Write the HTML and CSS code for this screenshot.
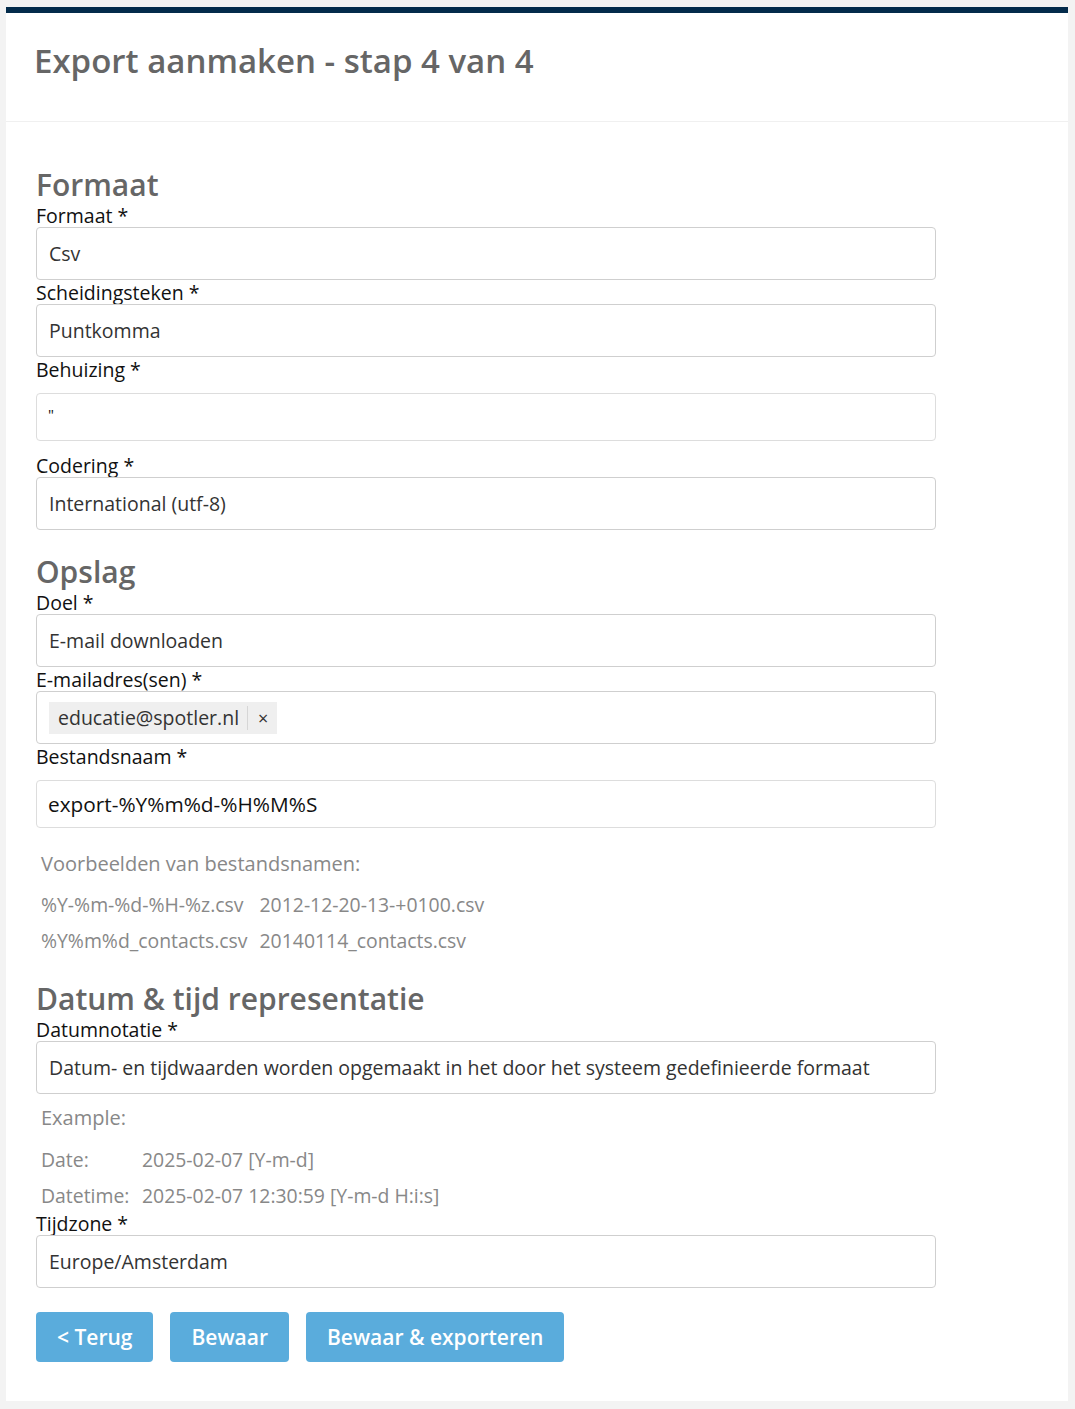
FILE: index.html
```html
<!DOCTYPE html>
<html lang="nl">
<head>
    <meta charset="UTF-8">
    <meta name="viewport" content="width=device-width, initial-scale=1.0">
    <title>Export aanmaken</title>
    <link rel="stylesheet" href="styles.css">
</head>
<body>
    <div class="panel">
        <div class="panel-header">
            <h1>Export aanmaken - stap 4 van 4</h1>
        </div>
        <form class="panel-body">
            <h2>Formaat</h2>
            <label>Formaat *</label>
            <div class="select">Csv</div>
            <label>Scheidingsteken *</label>
            <div class="select">Puntkomma</div>
            <label>Behuizing *</label>
            <div class="text-input small">"</div>
            <label>Codering *</label>
            <div class="select">International (utf-8)</div>

            <h2>Opslag</h2>
            <label>Doel *</label>
            <div class="select">E-mail downloaden</div>
            <label>E-mailadres(sen) *</label>
            <div class="select tags">
                <span class="tag">educatie@spotler.nl<span class="tag-remove">×</span></span>
            </div>
            <label>Bestandsnaam *</label>
            <div class="text-input">export-%Y%m%d-%H%M%S</div>
            <div class="help">
                <p>Voorbeelden van bestandsnamen:</p>
                <table class="examples">
                    <tr><td>%Y-%m-%d-%H-%z.csv</td><td>2012-12-20-13-+0100.csv</td></tr>
                    <tr><td>%Y%m%d_contacts.csv</td><td>20140114_contacts.csv</td></tr>
                </table>
            </div>

            <h2>Datum &amp; tijd representatie</h2>
            <label>Datumnotatie *</label>
            <div class="select">Datum- en tijdwaarden worden opgemaakt in het door het systeem gedefinieerde formaat</div>
            <div class="help help-date">
                <p>Example:</p>
                <table class="examples">
                    <tr><td class="key">Date:</td><td>2025-02-07 [Y-m-d]</td></tr>
                    <tr><td class="key">Datetime:</td><td>2025-02-07 12:30:59 [Y-m-d H:i:s]</td></tr>
                </table>
            </div>
            <label>Tijdzone *</label>
            <div class="select">Europe/Amsterdam</div>

            <div class="buttons">
                <button type="button" class="btn">&lt; Terug</button>
                <button type="button" class="btn">Bewaar</button>
                <button type="button" class="btn">Bewaar &amp; exporteren</button>
            </div>
        </form>
    </div>
</body>
</html>
```

FILE: styles.css
```css
* {
    box-sizing: border-box;
    font-family: "Open Sans", "Noto Sans", Arial, sans-serif;
}
body {
    margin: 0;
    padding: 7px 7px 8px 6px;
    background-color: #f3f3f3;
}
.panel {
    background-color: #fff;
    border-top: 6px solid #032b4b;
}
.panel-header {
    padding: 28px 28px 40px;
    border-bottom: 1px solid #f0f0f0;
}
h1 {
    margin: 0;
    font-size: 33px;
    line-height: 40px;
    font-weight: 600;
    color: #666;
}
.panel-body {
    padding: 21px 30px 39px;
    display: flex;
    flex-direction: column;
    align-items: flex-start;
}
h2 {
    margin: 24px 0 0 0;
    font-size: 30px;
    line-height: 36px;
    font-weight: 600;
    color: #666;
}
.help + h2 {
    margin-top: 23px;
}
label {
    display: block;
    font-size: 19.5px;
    line-height: 23px;
    color: #111;
    margin-top: 1px;
}
.select {
    width: 900px;
    height: 53px;
    border: 1px solid #cfcfcf;
    border-radius: 4px;
    padding: 0 12px;
    display: flex;
    align-items: center;
    font-size: 19.5px;
    color: #333;
}
.tags {
    padding: 0 12px;
}
.tag {
    display: inline-flex;
    align-items: center;
    height: 32px;
    background-color: #efefef;
    padding: 0 0 0 9px;
    font-size: 19.5px;
    color: #333;
}
.tag-remove {
    display: inline-block;
    margin-left: 8px;
    padding: 0 9px 0 10px;
    border-left: 1px solid #d6d6d6;
    line-height: 24px;
    font-size: 18px;
    color: #333;
}
.text-input {
    width: 900px;
    height: 48px;
    margin: 12px 0;
    border: 1px solid #ddd;
    border-radius: 4px;
    padding: 0 11px;
    display: flex;
    align-items: center;
    font-size: 20.8px;
    color: #111;
}
.text-input.small {
    font-size: 15px;
    align-items: flex-start;
    padding-top: 10px;
}
.help {
    padding-left: 5px;
    color: #888;
}
.help p {
    margin: 6px 0 4px;
    font-size: 20px;
    line-height: 36px;
}
.examples {
    border-collapse: collapse;
}
.examples td {
    padding: 0 12px 0 0;
    height: 36px;
    font-size: 19.4px;
    color: #888;
}
.examples td.key {
    width: 101px;
}
.help-date p {
    margin: 6px 0 5px;
}
.help-date + label {
    margin-top: -1px;
}
.buttons {
    display: flex;
    gap: 17px;
    margin-top: 24px;
}
.btn {
    height: 50px;
    padding: 0 21px;
    border: none;
    border-radius: 4px;
    background-color: #5aacdc;
    color: #fff;
    font-size: 21px;
    font-weight: 600;
}
```
